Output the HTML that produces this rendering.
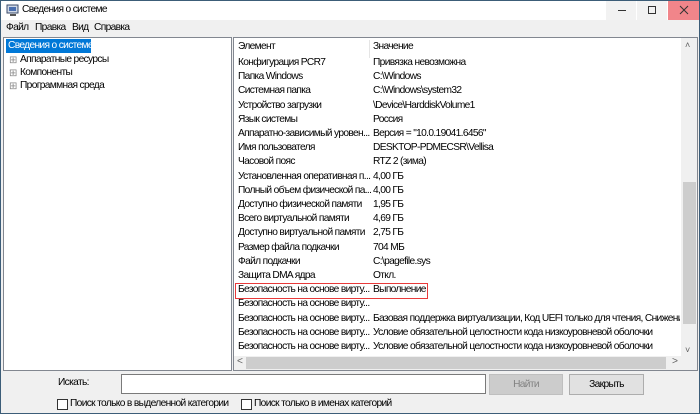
<!DOCTYPE html>
<html><head><meta charset="utf-8"><style>
*{margin:0;padding:0;box-sizing:border-box}
body{width:700px;height:414px;overflow:hidden;background:#f0f0f0;font-family:"Liberation Sans","DejaVu Sans",sans-serif;font-size:10.2px;letter-spacing:-0.65px;color:#000;position:relative}
.a{position:absolute;white-space:nowrap}
#frame{position:absolute;left:0;top:0;width:700px;height:414px;border:1px solid #3c5d78;pointer-events:none}
.row{position:absolute;left:238px;width:133px;overflow:hidden;height:14px;line-height:14px;white-space:nowrap}
.v{position:absolute;left:373px;width:307px;overflow:hidden;height:14px;line-height:14px;white-space:nowrap}
</style></head><body>
<div class="a" style="left:0;top:0;width:700px;height:20px;background:#fff"></div>
<svg class="a" style="left:6px;top:4px" width="14" height="13"><rect x="1" y="1" width="11" height="8" fill="#cfd8e6" stroke="#3a4a6a"/><rect x="3" y="3" width="7" height="4" fill="#4a6fb0"/><rect x="4" y="10" width="6" height="2" fill="#555"/></svg>
<div class="a" style="left:22px;top:4px">Сведения о системе</div>
<div class="a" style="left:606px;top:0;width:30px;height:20px;background:#f2f2f2"></div>
<div class="a" style="left:637px;top:0;width:30px;height:20px;background:#f2f2f2"></div>
<div class="a" style="left:668px;top:0;width:32px;height:20px;background:#f1858a"></div>
<div class="a" style="left:618px;top:10px;width:8px;height:1px;background:#333"></div>
<div class="a" style="left:648px;top:6px;width:8px;height:8px;border:1px solid #333"></div>
<svg class="a" style="left:679px;top:5px" width="10" height="10"><path d="M1 1L9 9M9 1L1 9" stroke="#333" stroke-width="1"/></svg>
<div class="a" style="left:6px;top:22px">Файл</div>
<div class="a" style="left:35px;top:22px">Правка</div>
<div class="a" style="left:72px;top:22px">Вид</div>
<div class="a" style="left:94px;top:22px">Справка</div>
<div class="a" style="left:3px;top:37px;width:229px;height:334px;background:#fff;border:1px solid #828790"></div>
<div class="a" style="left:6px;top:39px;width:85px;height:14px;background:#0078d7"></div>
<div class="a" style="left:8px;top:40px;color:#fff">Сведения о системе</div>
<div class="a" style="left:9px;top:55px;color:#888;font-size:10px">⊞</div>
<div class="a" style="left:9px;top:68px;color:#888;font-size:10px">⊞</div>
<div class="a" style="left:9px;top:81px;color:#888;font-size:10px">⊞</div>
<div class="a" style="left:20px;top:54px">Аппаратные ресурсы</div>
<div class="a" style="left:20px;top:67px">Компоненты</div>
<div class="a" style="left:20px;top:80px">Программная среда</div>
<div class="a" style="left:233px;top:37px;width:465px;height:334px;background:#fff;border:1px solid #828790;overflow:hidden">
<div class="a" style="left:135px;top:2px;width:1px;height:18px;background:#e5e5e5"></div>
</div>
<div class="row" style="top:40px">Элемент</div><div class="v" style="top:40px">Значение</div>
<div class="row" style="top:56px">Конфигурация PCR7</div><div class="v" style="top:56px">Привязка невозможна</div>
<div class="row" style="top:70px">Папка Windows</div><div class="v" style="top:70px">C:\Windows</div>
<div class="row" style="top:84px">Системная папка</div><div class="v" style="top:84px">C:\Windows\system32</div>
<div class="row" style="top:99px">Устройство загрузки</div><div class="v" style="top:99px">\Device\HarddiskVolume1</div>
<div class="row" style="top:113px">Язык системы</div><div class="v" style="top:113px">Россия</div>
<div class="row" style="top:127px">Аппаратно-зависимый уровен...</div><div class="v" style="top:127px">Версия = "10.0.19041.6456"</div>
<div class="row" style="top:141px">Имя пользователя</div><div class="v" style="top:141px">DESKTOP-PDMECSR\Vellisa</div>
<div class="row" style="top:155px">Часовой пояс</div><div class="v" style="top:155px">RTZ 2 (зима)</div>
<div class="row" style="top:170px">Установленная оперативная п...</div><div class="v" style="top:170px">4,00 ГБ</div>
<div class="row" style="top:184px">Полный объем физической па...</div><div class="v" style="top:184px">4,00 ГБ</div>
<div class="row" style="top:198px">Доступно физической памяти</div><div class="v" style="top:198px">1,95 ГБ</div>
<div class="row" style="top:212px">Всего виртуальной памяти</div><div class="v" style="top:212px">4,69 ГБ</div>
<div class="row" style="top:226px">Доступно виртуальной памяти</div><div class="v" style="top:226px">2,75 ГБ</div>
<div class="row" style="top:241px">Размер файла подкачки</div><div class="v" style="top:241px">704 МБ</div>
<div class="row" style="top:255px">Файл подкачки</div><div class="v" style="top:255px">C:\pagefile.sys</div>
<div class="row" style="top:269px">Защита DMA ядра</div><div class="v" style="top:269px">Откл.</div>
<div class="row" style="top:283px">Безопасность на основе вирту...</div><div class="v" style="top:283px">Выполнение</div>
<div class="row" style="top:297px">Безопасность на основе вирту...</div>
<div class="row" style="top:312px">Безопасность на основе вирту...</div><div class="v" style="top:312px">Базовая поддержка виртуализации, Код UEFI только для чтения, Снижение ...</div>
<div class="row" style="top:326px">Безопасность на основе вирту...</div><div class="v" style="top:326px">Условие обязательной целостности кода низкоуровневой оболочки</div>
<div class="row" style="top:340px">Безопасность на основе вирту...</div><div class="v" style="top:340px">Условие обязательной целостности кода низкоуровневой оболочки</div>
<div class="a" style="left:235px;top:283px;width:193px;height:16px;border:1px solid #e83a3a"></div>
<div class="a" style="left:681px;top:38px;width:16px;height:318px;background:#f0f0f0"></div>
<div class="a" style="left:683px;top:182px;width:13px;height:142px;background:#cdcdcd"></div>
<div class="a" style="left:685px;top:40px;font-size:9px;color:#606060">˄</div>
<div class="a" style="left:685px;top:345px;font-size:9px;color:#606060">˅</div>
<div class="a" style="left:234px;top:356px;width:447px;height:14px;background:#f0f0f0"></div>
<div class="a" style="left:246px;top:357px;width:420px;height:12px;background:#cdcdcd"></div>
<div class="a" style="left:237px;top:356px;color:#606060">&lt;</div>
<div class="a" style="left:672px;top:356px;color:#606060">&gt;</div>
<div class="a" style="left:681px;top:356px;width:16px;height:14px;background:#f0f0f0"></div>
<div class="a" style="left:58px;top:377px">Искать:</div>
<div class="a" style="left:121px;top:374px;width:365px;height:20px;background:#fff;border:1px solid #7a7a7a"></div>
<div class="a" style="left:489px;top:374px;width:74px;height:21px;background:#cccccc;border:1px solid #bfbfbf;color:#838383;text-align:center;line-height:19px">Найти</div>
<div class="a" style="left:569px;top:374px;width:75px;height:21px;background:#e1e1e1;border:1px solid #adadad;text-align:center;line-height:19px">Закрыть</div>
<div class="a" style="left:57px;top:399px;width:11px;height:11px;background:#fff;border:1px solid #333"></div>
<div class="a" style="left:70px;top:398px">Поиск только в выделенной категории</div>
<div class="a" style="left:241px;top:399px;width:11px;height:11px;background:#fff;border:1px solid #333"></div>
<div class="a" style="left:254px;top:398px">Поиск только в именах категорий</div>
<div id="frame"></div>
</body></html>
